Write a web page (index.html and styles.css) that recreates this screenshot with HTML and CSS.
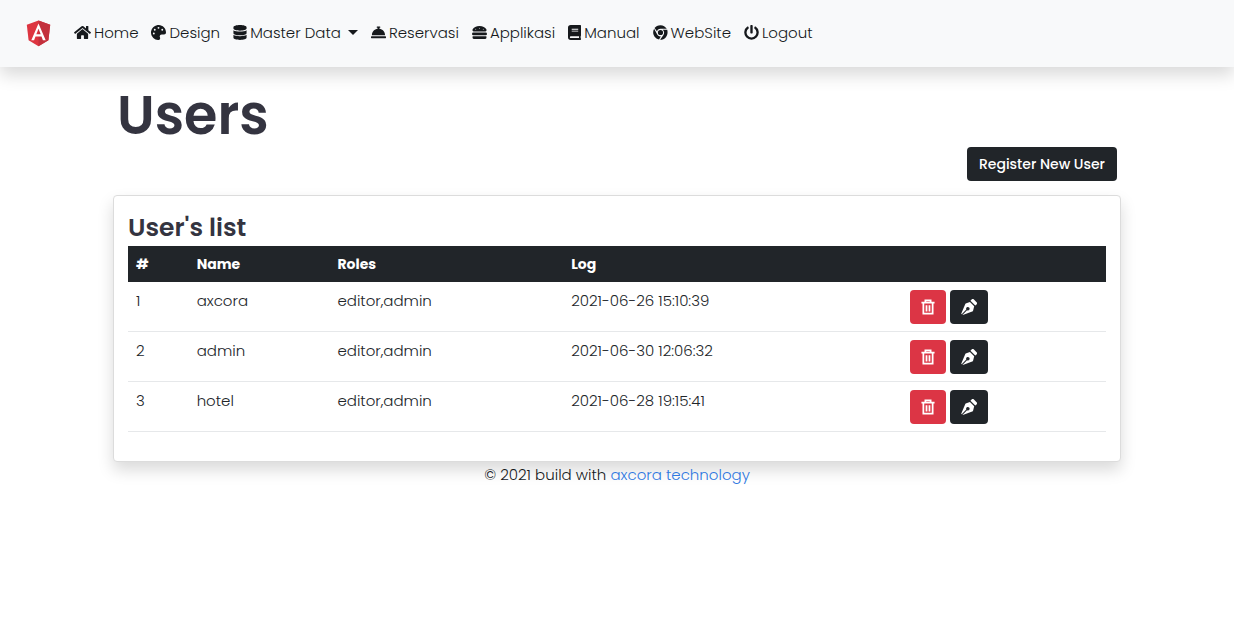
FILE: index.html
```html
<!DOCTYPE html>
<html lang="en">
<head>
<meta charset="utf-8">
<meta name="viewport" content="width=device-width, initial-scale=1">
<title>Users</title>
<link rel="stylesheet" href="styles.css">
</head>
<body>
<svg class="sprite" aria-hidden="true">
  <symbol id="trash" viewBox="0 0 16 18"><path fill="none" stroke="currentColor" stroke-width="2" d="M0.500 4h15M5 4V1.500h6V4M2.700 4v12.500h10.600V4M6.300 7v7M9.700 7v7"/></symbol>
  <symbol id="pen" viewBox="0 0 512 512"><path fill="currentColor" fill-rule="evenodd" d="M137 157 7 470l15 17 148-148a56 56 0 1 1 23 23L45 510l12 2 302-114a48 48 0 0 0 29-34l34-130-136-136-116 36a48 48 0 0 0-33 23zM498 100 414 14a52 52 0 0 0-74 0l-38 40 154 154 42-36a52 52 0 0 0 0-72z"/></symbol>
</svg>
<header class="navbar">
  <a class="brand" href="#" aria-label="Home page">
    <svg viewBox="0 0 250 270" width="25" height="27"><path fill="#dd3540" d="M125 5 8 47l18 155 99 60 99-60 18-155z"/><path fill="#c3303c" d="M125 5v257l99-60 18-155z"/><path fill="#fff" d="M125 34 53 202h28l14-37h60l14 37h28zm22 108h-44l22-54z"/></svg>
  </a>
  <nav aria-label="Main">
    <ul class="menu">
      <li><a href="#"><svg class="icon" viewBox="0 0 576 512" width="17" height="15"><path d="M280 148 96 300v164a16 16 0 0 0 16 16h112a16 16 0 0 0 16-16v-96a16 16 0 0 1 16-16h64a16 16 0 0 1 16 16v96a16 16 0 0 0 16 16h112a16 16 0 0 0 16-16V300L296 148a12 12 0 0 0-16 0zM572 251l-84-69V44a12 12 0 0 0-12-12h-56a12 12 0 0 0-12 12v72l-89-73a48 48 0 0 0-61 0L4 251a12 12 0 0 0-2 17l26 31a12 12 0 0 0 17 2L280 107a12 12 0 0 1 16 0l235 194a12 12 0 0 0 17-2l26-31a12 12 0 0 0-2-17z"/></svg>Home</a></li>
      <li><a href="#"><svg class="icon" viewBox="0 0 512 512" width="15" height="15"><path fill-rule="evenodd" d="M204 5C105 25 25 105 5 204c-37 187 131 326 258 306 41-6 61-55 42-92-23-45 10-98 61-98h79c37 0 67-30 67-67C512 95 367-27 204 5zM96 320a32 32 0 1 1 0-64 32 32 0 0 1 0 64zm32-128a32 32 0 1 1 0-64 32 32 0 0 1 0 64zm128-64a32 32 0 1 1 0-64 32 32 0 0 1 0 64zm128 64a32 32 0 1 1 0-64 32 32 0 0 1 0 64z"/></svg>Design</a></li>
      <li><button type="button" class="drop" aria-haspopup="true"><svg class="icon" viewBox="0 0 448 512" width="14" height="15"><path d="M448 73v46c0 40-100 73-224 73S0 159 0 119V73C0 33 100 0 224 0s224 33 224 73zm0 103v103c0 40-100 73-224 73S0 319 0 279V176c48 33 136 49 224 49s176-16 224-49zm0 160v103c0 40-100 73-224 73S0 479 0 439V336c48 33 136 49 224 49s176-16 224-49z"/></svg>Master Data<span class="caret"></span></button></li>
      <li><a href="#"><svg class="icon" viewBox="0 0 512 512" width="15" height="15"><path d="M288 130v-34h16a16 16 0 0 0 16-16V64a16 16 0 0 0-16-16h-96a16 16 0 0 0-16 16v16a16 16 0 0 0 16 16h16v34C119 146 32 233 32 352h448c0-119-87-206-192-222zM496 384H16a16 16 0 0 0-16 16v32a16 16 0 0 0 16 16h480a16 16 0 0 0 16-16v-32a16 16 0 0 0-16-16z"/></svg>Reservasi</a></li>
      <li><a href="#"><svg class="icon" viewBox="0 0 512 512" width="15" height="15"><path fill-rule="evenodd" d="M464 256H48a48 48 0 0 0 0 96h416a48 48 0 0 0 0-96zm16 128H32a16 16 0 0 0-16 16v16a64 64 0 0 0 64 64h352a64 64 0 0 0 64-64v-16a16 16 0 0 0-16-16zM58 224h396c35 0 55-44 35-77C455 88 367 32 256 32S57 88 23 147c-19 33 1 77 35 77zm326-96a16 16 0 1 1 0 32 16 16 0 0 1 0-32zM256 96a16 16 0 1 1 0 32 16 16 0 0 1 0-32zm-128 32a16 16 0 1 1 0 32 16 16 0 0 1 0-32z"/></svg>Applikasi</a></li>
      <li><a href="#"><svg class="icon" viewBox="0 0 448 512" width="13" height="15"><path fill-rule="evenodd" d="M448 360V24a24 24 0 0 0-24-24H96A96 96 0 0 0 0 96v320a96 96 0 0 0 96 96h328a24 24 0 0 0 24-24v-16c0-8-4-14-9-19-4-15-4-59 0-74 5-4 9-11 9-19zM128 128h224v32H128zm0 64h224v32H128zm253 256H96a32 32 0 0 1 0-64h285c-2 17-2 47 0 64z"/></svg>Manual</a></li>
      <li><a href="#"><svg class="icon" viewBox="0 0 512 512" width="15" height="15"><path d="M140 220 52 105C96 47 165 8 256 8c91 0 170 48 214 124H254c-64 0-108 41-114 88zM39 124C-37 250 14 443 207 499l62-112c-57 9-111-26-129-72zM334 164h152c42 147-36 336-243 340l113-166c40-58 24-127-22-174zM166 256a89 89 0 1 0 178 0 89 89 0 1 0-178 0z"/></svg>WebSite</a></li>
      <li><a href="#"><svg class="icon" viewBox="0 0 512 512" width="15" height="15"><path d="M400 54a248 248 0 1 1-288 0c12-8 28-4 35 8l16 28c6 11 3 24-7 32a168 168 0 1 0 200 0c-10-7-13-21-7-32l16-28c7-12 23-16 35-8zM296 264V24a24 24 0 0 0-24-24h-32a24 24 0 0 0-24 24v240a24 24 0 0 0 24 24h32a24 24 0 0 0 24-24z"/></svg>Logout</a></li>
    </ul>
  </nav>
</header>
<main class="container">
  <div class="heading">
    <h1>Users</h1>
    <button type="button" class="btn dark register">Register New User</button>
  </div>
  <section class="card">
    <h2>User's list</h2>
    <table>
      <colgroup><col class="c-id"><col class="c-name"><col class="c-roles"><col class="c-log"><col></colgroup>
      <thead><tr><th scope="col">#</th><th scope="col">Name</th><th scope="col">Roles</th><th scope="col">Log</th><td></td></tr></thead>
      <tbody>
        <tr><td>1</td><td>axcora</td><td>editor,admin</td><td>2021-06-26 15:10:39</td><td><div class="actions"><button type="button" class="btn danger" aria-label="Delete axcora"><svg width="14" height="16"><use href="#trash"/></svg></button><button type="button" class="btn dark" aria-label="Edit axcora"><svg width="16" height="16"><use href="#pen"/></svg></button></div></td></tr>
        <tr><td>2</td><td>admin</td><td>editor,admin</td><td>2021-06-30 12:06:32</td><td><div class="actions"><button type="button" class="btn danger" aria-label="Delete admin"><svg width="14" height="16"><use href="#trash"/></svg></button><button type="button" class="btn dark" aria-label="Edit admin"><svg width="16" height="16"><use href="#pen"/></svg></button></div></td></tr>
        <tr><td>3</td><td>hotel</td><td>editor,admin</td><td>2021-06-28 19:15:41</td><td><div class="actions"><button type="button" class="btn danger" aria-label="Delete hotel"><svg width="14" height="16"><use href="#trash"/></svg></button><button type="button" class="btn dark" aria-label="Edit hotel"><svg width="16" height="16"><use href="#pen"/></svg></button></div></td></tr>
      </tbody>
    </table>
  </section>
</main>
<footer class="footer">© 2021 build with <a href="#">axcora technology</a></footer>
</body>
</html>
```

FILE: styles.css
```css
* { box-sizing: border-box; }
body {
  margin: 0;
  background: #fff;
  color: #212529;
  font: 300 15px/22px Poppins, Inter, sans-serif;
}
.sprite { display: none; }
a { text-decoration: none; }
.navbar {
  display: flex;
  align-items: center;
  gap: 23px;
  padding: 20px 26px;
  background: #f8f9fa;
  box-shadow: 0 8px 16px rgba(0, 0, 0, .15);
}
.brand { display: flex; }
.menu {
  display: flex;
  flex-wrap: wrap;
  gap: 13px;
  margin: 0;
  padding: 0 0 2px;
  list-style: none;
}
.menu a, .drop {
  display: flex;
  align-items: center;
  gap: 3px;
  padding: 0;
  border: 0;
  background: none;
  color: #16191c;
  font: inherit;
}
.icon { fill: currentColor; }
.caret {
  margin-left: 4px;
  border: 5px solid transparent;
  border-top-color: currentColor;
  border-bottom: 0;
}
.container {
  max-width: 1008px;
  margin: 0 auto;
}
.heading {
  display: flex;
  flex-direction: column;
  padding: 16px 4px 14px;
}
h1, h2 { margin: 0; color: #343440; font-weight: 600; }
h1 { font-size: 54px; line-height: 64px; }
h2 { font-size: 25px; line-height: 36px; }
.btn {
  display: flex;
  align-items: center;
  justify-content: center;
  height: 34px;
  padding: 0 11px;
  border: 0;
  border-radius: 4px;
  color: #fff;
  font: inherit;
}
.dark { background: #212529; }
.danger { background: #dc3545; }
.register {
  align-self: flex-end;
  padding: 0 12px;
  font-size: 14px;
  font-weight: 500;
}
.card {
  padding: 14px 14px 29px;
  border: 1px solid #dcdcdc;
  border-radius: 4px;
  background: #fff;
  box-shadow: 0 8px 16px rgba(0, 0, 0, .15);
}
table {
  width: 100%;
  table-layout: fixed;
  border-collapse: collapse;
}
.c-id { width: 6.2%; }
.c-name { width: 14.4%; }
.c-roles { width: 23.9%; }
.c-log { width: 34.6%; }
th, td {
  padding: 7px 8px;
  text-align: left;
  vertical-align: top;
}
thead { background: #212529; color: #fff; }
th { font-size: 14px; font-weight: 700; }
tbody tr { border-bottom: 1px solid #e6e8ea; }
tbody td { padding-top: 8px; }
.actions { display: flex; gap: 4px; }
.footer { padding-top: 2px; color: #16191c; text-align: center; }
.footer a { color: #2f78e0; }
```
